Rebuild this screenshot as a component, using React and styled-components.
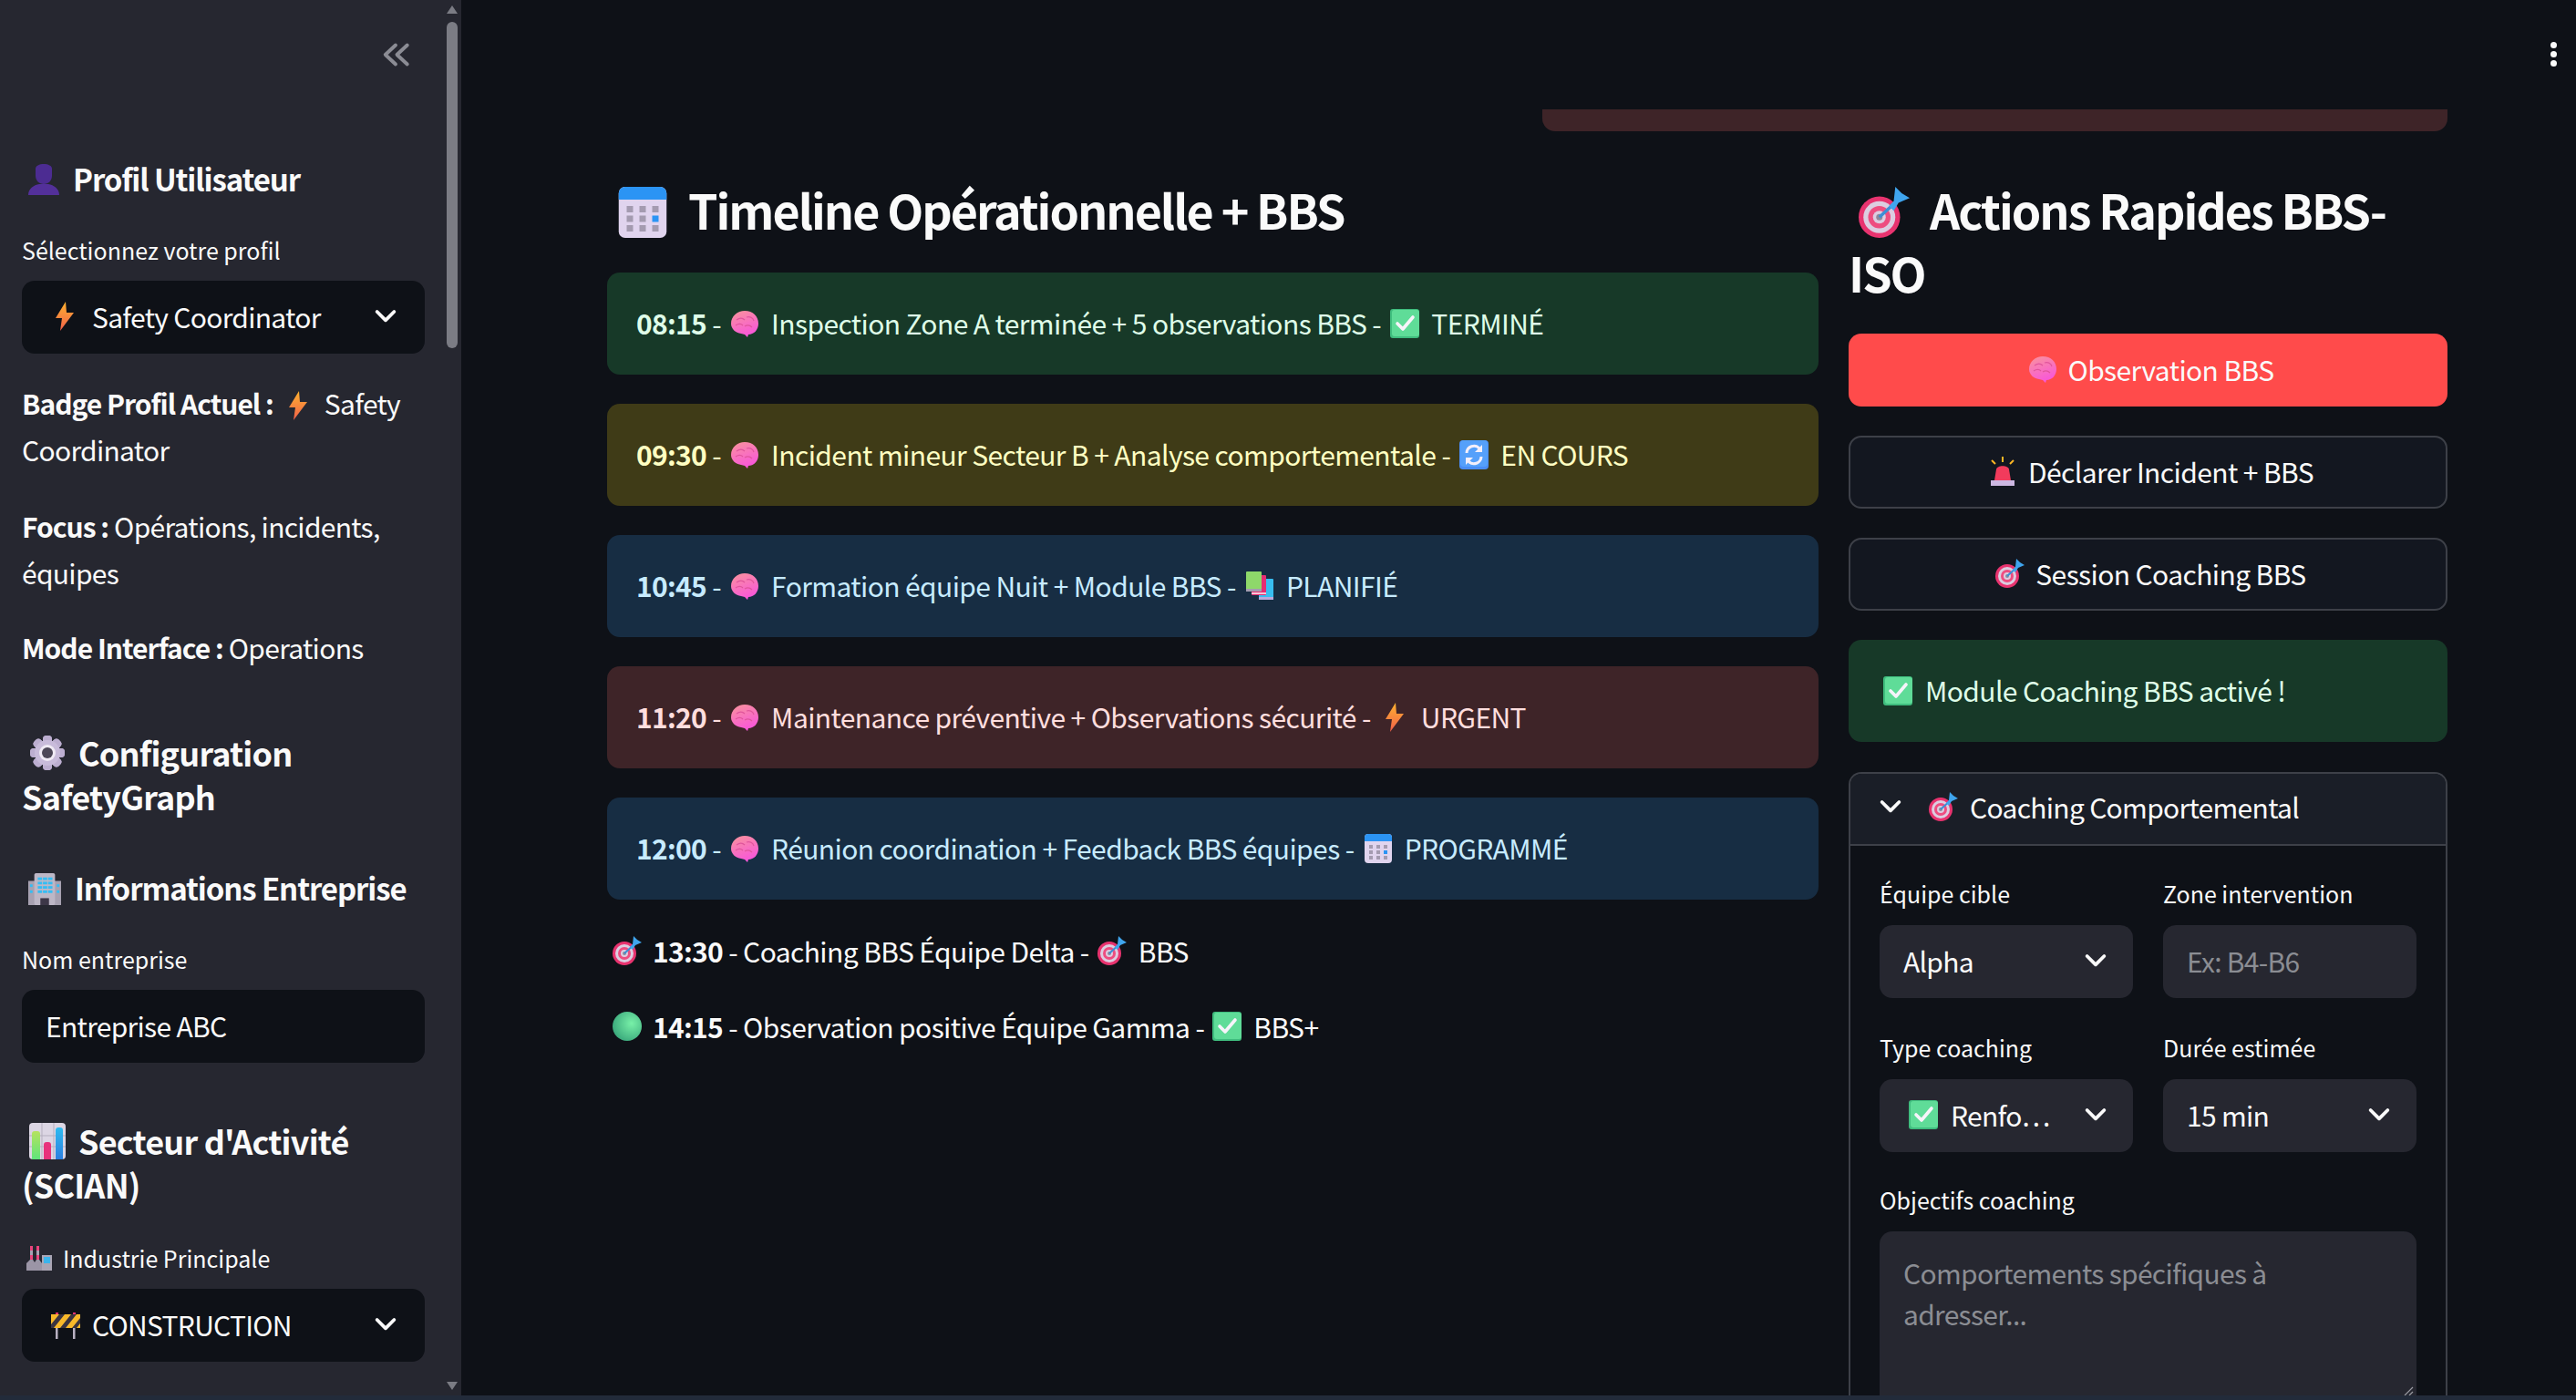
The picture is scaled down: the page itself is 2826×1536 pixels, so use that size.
import React from "react";
import styled, { createGlobalStyle } from "styled-components";

const font = `"Noto Sans CJK SC", "Noto Sans", sans-serif`;

const Global = createGlobalStyle`
  html, body { margin: 0; padding: 0; background: #0e1117; }
  body { font-family: ${font}; color: #fafafa; overflow: hidden; }
  * { box-sizing: border-box; }
`;

/* emoji drawings */
const Brain = ({ size = 32 }) => (
  <svg width={size} height={size} viewBox="0 0 32 32">
    <defs>
      <linearGradient id="brainFill" x1="0.2" y1="0" x2="0.6" y2="1">
        <stop offset="0" stopColor="#f9909f" />
        <stop offset="1" stopColor="#f854dc" />
      </linearGradient>
    </defs>
    <path d="M1 16C1 8 8 2 16 2c9 0 15 6 15 14 0 7-5 12-11 12l-1 3-3-3-4-1C6 26 1 22 1 16z" fill="url(#brainFill)" />
    <path d="M7 12c4-3 7-2 9 0m-10 6c3-2 6-2 8 0m4-9c3-1 7 0 8 4m-10 6c3-2 6-1 8 1" stroke="#e0559c" strokeWidth="1.2" fill="none" />
  </svg>
);

const Check = ({ size = 32 }) => (
  <svg width={size} height={size} viewBox="0 0 32 32">
    <rect x="0" y="0" width="32" height="32" rx="3" fill="#3fbd7e" />
    <rect x="2" y="1" width="30" height="29" rx="3" fill="#5fdc98" />
    <path d="M8 16l6 6 11-13" stroke="#f6f4fa" strokeWidth="3.600" fill="none" strokeLinecap="round" strokeLinejoin="round" />
  </svg>
);

const Bolt = ({ size = 32 }) => (
  <svg width={size} height={size} viewBox="0 0 32 32">
    <defs>
      <linearGradient id="boltFill" x1="0" y1="0" x2="0" y2="1">
        <stop offset="0" stopColor="#fdb22f" />
        <stop offset="1" stopColor="#f2604a" />
      </linearGradient>
    </defs>
    <path d="M17 0L6 18h7l-2 14 15-20h-8z" fill="url(#boltFill)" />
  </svg>
);

const Target = ({ size = 32 }) => (
  <svg width={size} height={size} viewBox="0 0 32 32">
    <circle cx="13" cy="19" r="13" fill="#e8336f" />
    <circle cx="13" cy="19" r="10" fill="#dccde0" />
    <circle cx="13" cy="19" r="7" fill="#ee4d80" />
    <circle cx="13" cy="19" r="4" fill="#dccde0" />
    <circle cx="13" cy="19" r="2" fill="#8f8a9a" />
    <path d="M13 19L25 8" stroke="#3b8fd6" strokeWidth="2" />
    <path d="M19 12l3-3 1-9 4 4 5 3-7 3-3 5z" fill="#3fa5ee" />
  </svg>
);

const Calendar = ({ size = 32 }) => (
  <svg width={size} height={size} viewBox="0 0 32 32">
    <rect x="1" y="0" width="30" height="32" rx="4" fill="#e0d4ee" />
    <path d="M1 8V4a4 4 0 014-4h22a4 4 0 014 4v4z" fill="#2b94f4" />
    {[6, 14, 22].map((x) =>
      [12, 18, 24].map((y) => (
        <rect key={`${x}${y}`} x={x} y={y} width="4" height="4" fill={x === 22 && y === 18 ? "#2b94f4" : "#a49bb0"} />
      ))
    )}
  </svg>
);

const Books = ({ size = 32 }) => (
  <svg width={size} height={size} viewBox="0 0 32 32">
    <rect x="15" y="8" width="16" height="22" rx="1" fill="#38bdf0" />
    <rect x="15" y="28" width="16" height="3" fill="#b9a8dc" />
    <rect x="7" y="4" width="16" height="22" rx="1" fill="#e62d72" />
    <rect x="7" y="23" width="16" height="2" fill="#f4c6d8" />
    <rect x="1" y="0" width="17" height="21" rx="1" fill="#8ed86a" />
    <rect x="1" y="19" width="17" height="3" fill="#a39cb0" />
  </svg>
);

const Cycle = ({ size = 32 }) => (
  <svg width={size} height={size} viewBox="0 0 32 32">
    <rect x="0" y="0" width="32" height="32" rx="4" fill="#4a8df5" />
    <rect x="1" y="0" width="30" height="29" rx="4" fill="#55a0fa" />
    <path d="M8 14a8 8 0 0114-5m2 9a8 8 0 01-14 5" stroke="#f4effa" strokeWidth="3" fill="none" />
    <path d="M25 5v8h-8zM7 27v-8h8z" fill="#f4effa" />
  </svg>
);

const Person = ({ size = 34 }) => (
  <svg width={size} height={size} viewBox="0 0 34 34">
    <path d="M8 5c0-3 4-5 9-5s9 2 9 5v8c0 5-4 9-9 9s-9-4-9-9z" fill="#4c2c92" />
    <path d="M0 34c0-7 6-11 12-12h10c6 1 12 5 12 12z" fill="#53309a" />
  </svg>
);

const Gear = ({ size = 40 }) => (
  <svg width={size} height={size} viewBox="0 0 40 40">
    {[0, 45, 90, 135, 180, 225, 270, 315].map((a) => (
      <rect key={a} x="15" y="1" width="10" height="38" rx="4" fill="#bcaed0" transform={`rotate(${a} 20 20)`} />
    ))}
    <circle cx="20" cy="20" r="14" fill="#c8bbda" />
    <circle cx="20" cy="20" r="9" fill="#efeaf4" />
    <circle cx="20" cy="20" r="6" fill="#4c4757" />
  </svg>
);

const Building = ({ size = 36 }) => (
  <svg width={size} height={size} viewBox="0 0 38 38">
    <rect x="0" y="10" width="38" height="28" fill="#a7a1b1" />
    <rect x="7" y="1" width="24" height="37" rx="2" fill="#bdb7c6" />
    {[6, 11, 16, 21].map((y) =>
      [11, 17, 23].map((x) => <rect key={`${x}${y}`} x={x} y={y} width="5" height="3" fill="#34bdf4" />)
    )}
    <rect x="2" y="14" width="3" height="3" fill="#34bdf4" />
    <rect x="2" y="21" width="3" height="3" fill="#34bdf4" />
    <rect x="33" y="14" width="3" height="3" fill="#34bdf4" />
    <rect x="33" y="21" width="3" height="3" fill="#34bdf4" />
    <rect x="14" y="30" width="10" height="8" fill="#3d3748" />
  </svg>
);

const Chart = ({ size = 40 }) => (
  <svg width={size} height={size} viewBox="0 0 40 40">
    <defs>
      <linearGradient id="barGreen" x1="0" y1="0" x2="0" y2="1">
        <stop offset="0" stopColor="#b6e25f" />
        <stop offset="1" stopColor="#5fe57c" />
      </linearGradient>
      <linearGradient id="barBlue" x1="0" y1="0" x2="0" y2="1">
        <stop offset="0" stopColor="#2dbbf0" />
        <stop offset="1" stopColor="#2d7fe0" />
      </linearGradient>
    </defs>
    <rect x="0" y="0" width="40" height="40" rx="4" fill="#dcd6e4" />
    <path d="M0 14h40M0 26h40M14 0v40M27 0v40" stroke="#b5afbf" strokeWidth="1" />
    <path d="M3 40V12a3 3 0 013-3h3a3 3 0 013 3v28z" fill="url(#barGreen)" />
    <path d="M16 40V24a3 3 0 013-3h2a3 3 0 013 3v16z" fill="#e8327c" />
    <path d="M29 40V8a3 3 0 013-3h2a3 3 0 013 3v32z" fill="url(#barBlue)" />
  </svg>
);

const Factory = ({ size = 28 }) => (
  <svg width={size} height={size} viewBox="0 0 28 28">
    <path d="M4 1h3v5H4zM11 1h3v5h-3zM4 11h3v5H4zM11 11h3v5h-3z" fill="#e8447c" />
    <path d="M4 6h3v5H4zM11 6h3v5h-3z" fill="#a8a2b2" />
    <path d="M0 28V20l4-4h3l2 3 2-3h3l3 4v8z" fill="#9b95a6" />
    <rect x="17" y="11" width="11" height="17" fill="#aaa5b4" />
    <rect x="19" y="13" width="7" height="7" fill="#3bb4ec" />
  </svg>
);

const Barrier = ({ size = 32 }) => (
  <svg width={size} height={size} viewBox="0 0 32 32">
    <rect x="5" y="18" width="2.500" height="14" fill="#b8b0c2" />
    <rect x="24" y="18" width="2.500" height="14" fill="#b8b0c2" />
    <rect x="5" y="3" width="3" height="3" fill="#e8336f" />
    <rect x="24" y="3" width="3" height="3" fill="#e8336f" />
    <rect x="0" y="5" width="32" height="15" fill="#f8b92a" />
    <path d="M0 16L9 5h6L3 20H0zM10 20L22 5h6L16 20zM23 20l9-11v6l-4 5z" fill="#3a3440" />
  </svg>
);

const Siren = ({ size = 32 }) => (
  <svg width={size} height={size} viewBox="0 0 32 32">
    <path d="M16 0v6M4 4l4 4M28 4l-4 4" stroke="#fbb625" strokeWidth="2" />
    <path d="M7 26l2-12c1-5 13-5 14 0l2 12z" fill="#f23b5c" />
    <rect x="3" y="26" width="26" height="6" fill="#cdb8e2" />
  </svg>
);

const GreenDot = ({ size = 32 }) => (
  <svg width={size} height={size} viewBox="0 0 32 32">
    <defs>
      <radialGradient id="dotFill" cx="0.65" cy="0.4" r="0.8">
        <stop offset="0" stopColor="#78f0a8" />
        <stop offset="1" stopColor="#2f9c74" />
      </radialGradient>
    </defs>
    <circle cx="16" cy="16" r="16" fill="url(#dotFill)" />
  </svg>
);

const Chevron = ({ size = 30 }) => (
  <svg width={size} height={size} viewBox="0 0 24 24" fill="none" stroke="#fafafa" strokeWidth="3" strokeLinecap="round" strokeLinejoin="round">
    <path d="M4.500 8l7.500 7.500L19.500 8" />
  </svg>
);

const DoubleLeft = () => (
  <svg width="36" height="36" viewBox="0 0 24 24" fill="none" stroke="#8b8c94" strokeWidth="2.600" strokeLinecap="round" strokeLinejoin="round">
    <path d="M12 5l-7.500 7 7.500 7M20.500 5l-7.500 7 7.500 7" />
  </svg>
);

/* layout */
const Page = styled.div`
  display: flex;
  height: 1536px;
  width: 2826px;
  overflow: hidden;
  border-bottom: 5px solid #222b3a;
`;

const Sidebar = styled.aside`
  width: 506px;
  flex: none;
  display: flex;
  background: #262730;
`;

const SideBody = styled.div`
  width: 490px;
  flex: none;
  padding: 0 24px;
  overflow: hidden;
`;

const Rail = styled.div`
  width: 12px;
  flex: none;
  display: flex;
  flex-direction: column;
  align-items: center;
  padding-top: 6px;
`;

const RailUp = styled.div`
  width: 0;
  height: 0;
  border-left: 6px solid transparent;
  border-right: 6px solid transparent;
  border-bottom: 9px solid #7b7c84;
`;

const RailDown = styled(RailUp)`
  margin-top: auto;
  margin-bottom: 6px;
  border-bottom: 0;
  border-top: 9px solid #7b7c84;
`;

const Thumb = styled.div`
  width: 12px;
  height: 358px;
  margin-top: 9px;
  border-radius: 6px;
  background: #7b7c84;
`;

const Collapse = styled.div`
  display: flex;
  justify-content: flex-end;
  padding: 42px 0 0;
  margin-right: 14px;
  height: 175px;
`;

const SideHeading = styled.h3`
  margin: ${(p) => p.$top || 0} 0 0;
  font-size: 33px;
  line-height: 43px;
  font-weight: 600;
  letter-spacing: -1.1px;
  white-space: nowrap;
  display: flex;
  align-items: center;
  gap: 15px;
  padding-left: 7px;
`;

const BlockHeading = styled.h3`
  margin: ${(p) => p.$top} 0 0;
  font-size: 36px;
  line-height: 48px;
  font-weight: 600;
  letter-spacing: -0.8px;
  svg { vertical-align: -5px; margin: 0 14px 0 8px; }
`;

const Label = styled.div`
  font-size: 25px;
  line-height: 36px;
  color: #fafafa;
  display: flex;
  align-items: center;
  gap: 12px;
  margin: ${(p) => p.$top || 0} 0 16px;
  svg { margin-left: 5px; }
`;

const Select = styled.div`
  height: 80px;
  border-radius: 14px;
  background: ${(p) => (p.$soft ? "#262730" : "#0e1117")};
  display: flex;
  align-items: center;
  padding: 0 ${(p) => (p.$soft ? "26px" : "28px")} 3px ${(p) => p.$left || "26px"};
  font-size: 30px;
  line-height: 40px;
  letter-spacing: -0.7px;
  gap: ${(p) => p.$gap || "14px"};
  color: ${(p) => (p.$muted ? "#8b8d93" : "#fafafa")};
  svg:last-child { margin-left: auto; }
`;

const SideText = styled.p`
  margin: ${(p) => p.$top} 0 0;
  font-size: 30px;
  line-height: 51px;
  letter-spacing: -0.7px;
  b { font-weight: 600; letter-spacing: -1px; }
  svg { vertical-align: -6px; margin: 0 13px 0 11px; }
`;

const Main = styled.main`
  flex: 1;
  min-width: 0;
  position: relative;
  overflow: hidden;
  padding: 0 141px 0 160px;
  display: grid;
  grid-template-columns: 1329px 657px;
  column-gap: 33px;
  align-content: start;
`;

const Kebab = styled.div`
  position: absolute;
  top: 46px;
  right: 21px;
  display: flex;
  flex-direction: column;
  gap: 3px;
  span { width: 7px; height: 7px; border-radius: 50%; background: #fafafa; }
`;

const TopStrip = styled.div`
  grid-column: 2;
  margin-left: -336px;
  height: 144px;
  display: flex;
  align-items: flex-end;
`;

const StripBar = styled.div`
  width: 100%;
  height: 24px;
  background: #3e2428;
  border-radius: 0 0 14px 14px;
`;

const Spacer = styled.div`
  grid-column: 1;
`;

const H2 = styled.h2`
  margin: 51px 0 0;
  font-size: 52px;
  line-height: 69px;
  font-weight: 600;
  letter-spacing: -2px;
  svg { vertical-align: -9px; margin: 0 22px 0 11px; }
`;

const Timeline = styled.div`
  margin-top: 35px;
  display: flex;
  flex-direction: column;
  gap: 32px;
`;

const tones = {
  green: ["#173928", "#dffde9"],
  yellow: ["#3f3b17", "#ffffc2"],
  blue: ["#172d43", "#c7ebff"],
  red: ["#3e2428", "#ffdede"],
};

const Alert = styled.div`
  height: 112px;
  border-radius: 14px;
  background: ${(p) => tones[p.$tone][0]};
  color: ${(p) => tones[p.$tone][1]};
  padding: 0 32px 3px;
  display: flex;
  align-items: center;
  font-size: 30px;
  line-height: 40px;
  letter-spacing: -0.6px;
  white-space: pre;
  b { font-weight: 600; letter-spacing: -0.7px; }
  svg { margin: 0 7px 0 10px; flex: none; transform: translateY(1px); }
`;

const ModuleAlert = styled(Alert)`
  margin-top: 32px;
  svg { margin: 0 14px 0 6px; }
`;

const PlainRow = styled.div`
  display: flex;
  align-items: center;
  font-size: 30px;
  line-height: 40px;
  letter-spacing: -0.6px;
  white-space: pre;
  padding-left: 6px;
  margin-top: ${(p) => p.$top};
  b { font-weight: 600; letter-spacing: -0.7px; }
  svg { flex: none; margin: 0 7px 0 9px; }
  svg:first-child { margin: 0 12px 0 0; }
`;

const Button = styled.div`
  height: 80px;
  border-radius: 14px;
  display: flex;
  align-items: center;
  justify-content: center;
  gap: 12px;
  padding: 0 0 3px 6px;
  font-size: 30px;
  line-height: 40px;
  letter-spacing: -0.6px;
  margin-top: ${(p) => p.$top};
  background: ${(p) => (p.$primary ? "#ff4b4b" : "#131720")};
  border: ${(p) => (p.$primary ? "0" : "2px solid #3d4048")};
`;

const Expander = styled.div`
  margin-top: 33px;
  border: 2px solid #3d4048;
  border-bottom: 0;
  border-radius: 14px 14px 0 0;
  height: 730px;
`;

const ExpanderHead = styled.div`
  height: 79px;
  background: #1a1e27;
  border-bottom: 2px solid #3d4048;
  border-radius: 12px 12px 0 0;
  display: flex;
  align-items: center;
  padding: 0 0 5px 29px;
  font-size: 30px;
  line-height: 40px;
  letter-spacing: -0.7px;
  svg { flex: none; }
  svg:first-child { margin-right: 27px; }
  span { margin-left: 13px; }
`;

const ExpanderBody = styled.div`
  padding: 34px 32px 0;
  display: grid;
  grid-template-columns: 278px 278px;
  column-gap: 33px;
  row-gap: 36px;
`;

const FormLabel = styled.div`
  font-size: 25px;
  line-height: 36px;
  margin-bottom: 17px;
`;

const Wide = styled.div`
  grid-column: 1 / -1;
  margin-top: -2px;
`;

const TextArea = styled.div`
  position: relative;
  height: 230px;
  border-radius: 14px;
  background: #262730;
  color: #8b8d93;
  font-size: 30px;
  line-height: 45px;
  letter-spacing: -0.7px;
  padding: 23px 26px;
`;

const Grip = styled.svg`
  position: absolute;
  right: 3px;
  top: 169px;
`;

function Field({ label, children }) {
  return (
    <div>
      <FormLabel>{label}</FormLabel>
      {children}
    </div>
  );
}

export default function App() {
  return (
    <>
      <Global />
      <Page>
        <Sidebar>
          <SideBody>
            <Collapse>
              <DoubleLeft />
            </Collapse>
            <SideHeading>
              <Person />
              Profil Utilisateur
            </SideHeading>
            <Label $top="38px">Sélectionnez votre profil</Label>
            <Select $left="31px">
              <Bolt />
              Safety Coordinator
              <Chevron />
            </Select>
            <SideText $top="29px">
              <b>Badge Profil Actuel :</b>
              <Bolt />
              Safety Coordinator
            </SideText>
            <SideText $top="33px">
              <b>Focus :</b> Opérations, incidents, équipes
            </SideText>
            <SideText $top="31px">
              <b>Mode Interface :</b> Operations
            </SideText>
            <BlockHeading $top="65px">
              <Gear />
              Configuration SafetyGraph
            </BlockHeading>
            <SideHeading $top="56px">
              <Building />
              Informations Entreprise
            </SideHeading>
            <Label $top="38px">Nom entreprise</Label>
            <Select>Entreprise ABC</Select>
            <BlockHeading $top="61px">
              <Chart />
              Secteur d'Activité (SCIAN)
            </BlockHeading>
            <Label $top="39px">
              <Factory />
              Industrie Principale
            </Label>
            <Select $left="32px" $gap="13px">
              <Barrier />
              CONSTRUCTION
              <Chevron />
            </Select>
          </SideBody>
          <Rail>
            <RailUp />
            <Thumb />
            <RailDown />
          </Rail>
        </Sidebar>
        <Main>
          <Kebab>
            <span />
            <span />
            <span />
          </Kebab>
          <Spacer />
          <TopStrip>
            <StripBar />
          </TopStrip>
          <div>
            <H2>
              <Calendar size={56} />
              Timeline Opérationnelle + BBS
            </H2>
            <Timeline>
              <Alert $tone="green">
                <b>08:15</b> -<Brain /> Inspection Zone A terminée + 5 observations BBS -<Check /> TERMINÉ
              </Alert>
              <Alert $tone="yellow">
                <b>09:30</b> -<Brain /> Incident mineur Secteur B + Analyse comportementale -<Cycle /> EN COURS
              </Alert>
              <Alert $tone="blue">
                <b>10:45</b> -<Brain /> Formation équipe Nuit + Module BBS -<Books /> PLANIFIÉ
              </Alert>
              <Alert $tone="red">
                <b>11:20</b> -<Brain /> Maintenance préventive + Observations sécurité -<Bolt /> URGENT
              </Alert>
              <Alert $tone="blue">
                <b>12:00</b> -<Brain /> Réunion coordination + Feedback BBS équipes -<Calendar /> PROGRAMMÉ
              </Alert>
            </Timeline>
            <PlainRow $top="36px">
              <Target />
              <b>13:30</b> - Coaching BBS Équipe Delta -<Target /> BBS
            </PlainRow>
            <PlainRow $top="43px">
              <GreenDot />
              <b>14:15</b> - Observation positive Équipe Gamma -<Check /> BBS+
            </PlainRow>
          </div>
          <div>
            <H2>
              <Target size={56} />
              Actions Rapides BBS-ISO
            </H2>
            <Button $primary $top="33px">
              <Brain />
              Observation BBS
            </Button>
            <Button $top="32px">
              <Siren />
              Déclarer Incident + BBS
            </Button>
            <Button $top="32px">
              <Target />
              Session Coaching BBS
            </Button>
            <ModuleAlert $tone="green">
              <Check />
              Module Coaching BBS activé !
            </ModuleAlert>
            <Expander>
              <ExpanderHead>
                <Chevron />
                <Target />
                <span>Coaching Comportemental</span>
              </ExpanderHead>
              <ExpanderBody>
                <Field label="Équipe cible">
                  <Select $soft>
                    Alpha
                    <Chevron />
                  </Select>
                </Field>
                <Field label="Zone intervention">
                  <Select $soft $muted>
                    Ex: B4-B6
                  </Select>
                </Field>
                <Field label="Type coaching">
                  <Select $soft $left="32px">
                    <Check />
                    Renfo…
                    <Chevron />
                  </Select>
                </Field>
                <Field label="Durée estimée">
                  <Select $soft>
                    15 min
                    <Chevron />
                  </Select>
                </Field>
                <Wide>
                  <FormLabel>Objectifs coaching</FormLabel>
                  <TextArea>
                    Comportements spécifiques à adresser...
                    <Grip width="12" height="12" viewBox="0 0 12 12">
                      <path d="M2 11L11 2M7 11l4-4" stroke="#9a9ba2" strokeWidth="1.200" />
                    </Grip>
                  </TextArea>
                </Wide>
              </ExpanderBody>
            </Expander>
          </div>
        </Main>
      </Page>
    </>
  );
}
